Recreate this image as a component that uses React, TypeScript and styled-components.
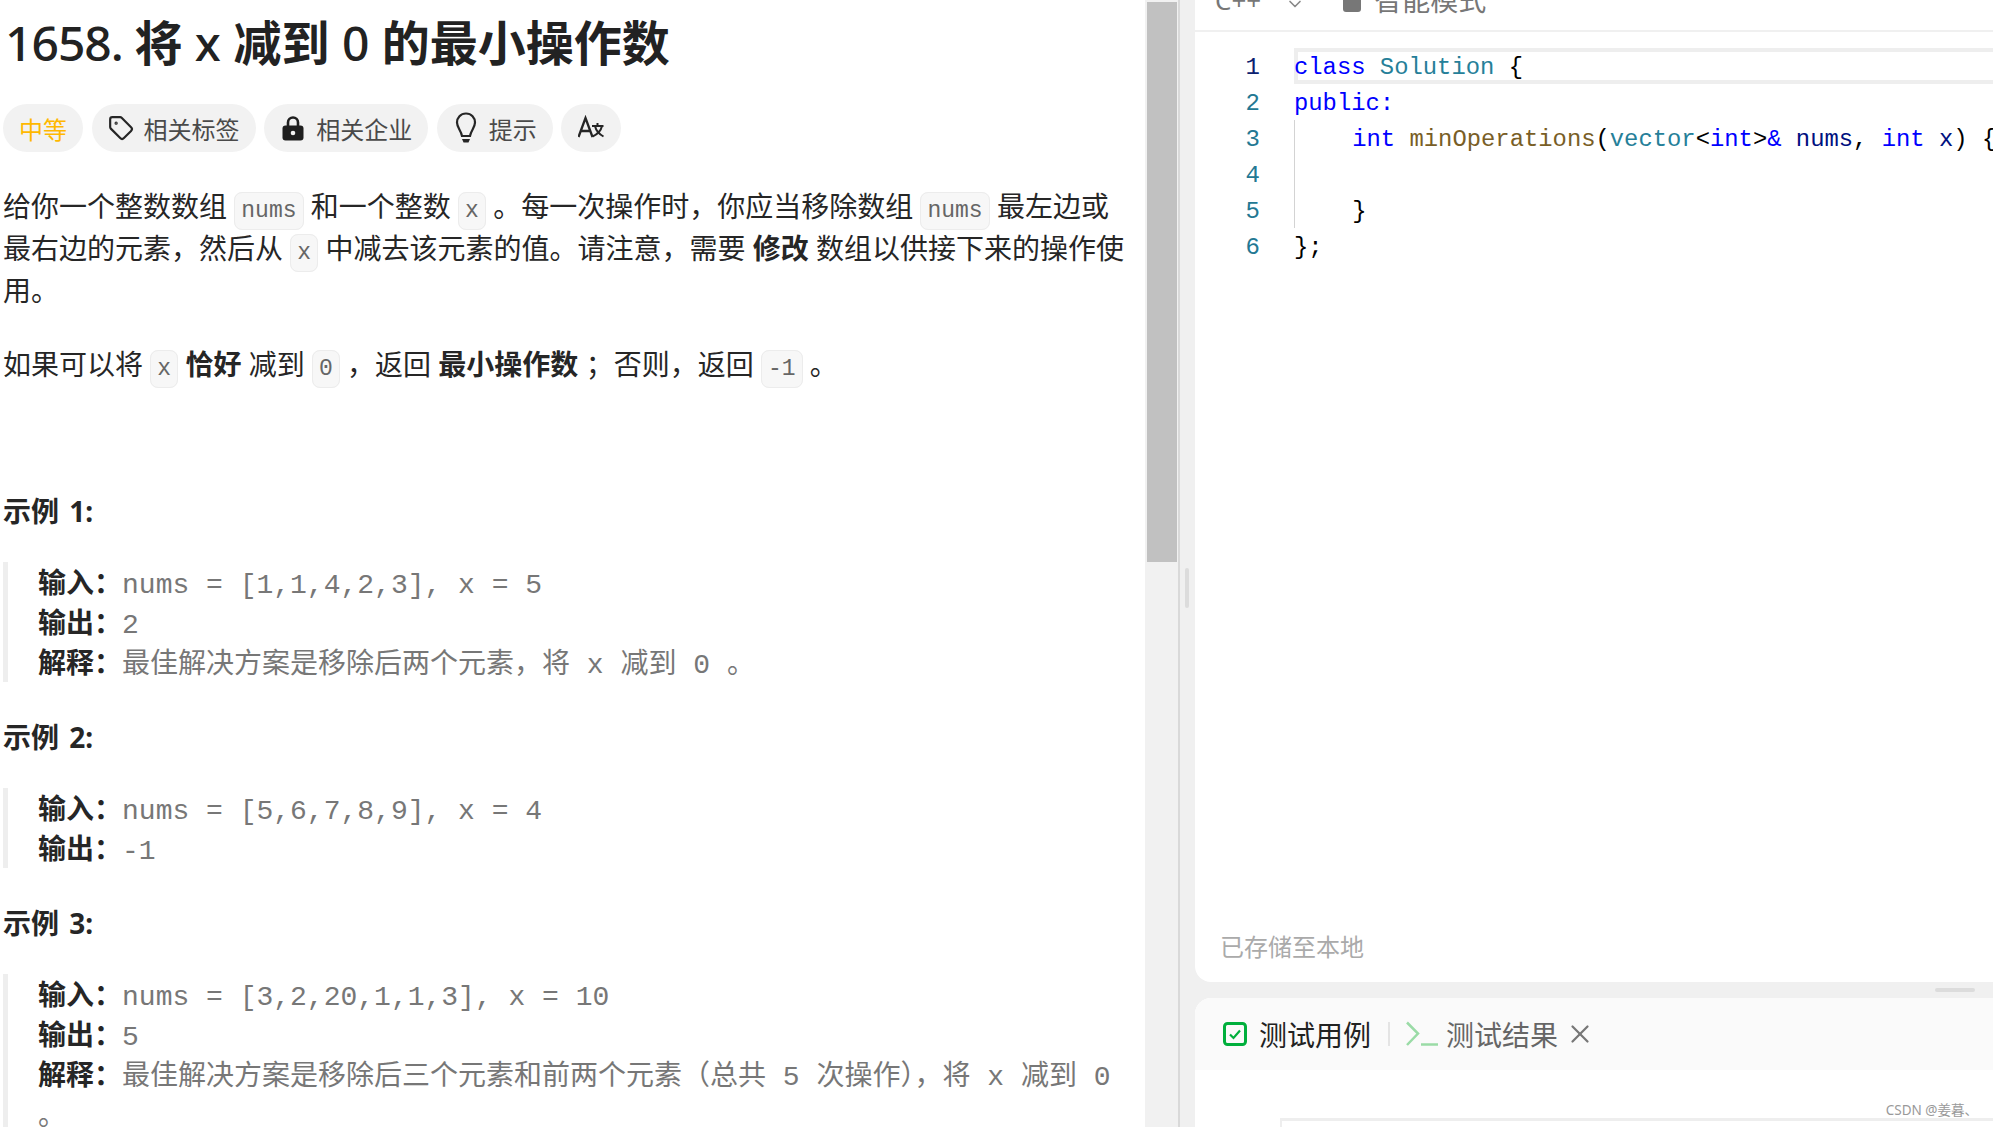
import React from 'react';
import styled, { createGlobalStyle } from 'styled-components';
import { ChevronDown, Tag as TagIcon, X } from 'lucide-react';

const sansStack = `"Noto Sans", "Noto Sans CJK SC", sans-serif`;
const monoStack = `"Liberation Mono", "Noto Sans CJK SC", monospace`;

const GlobalStyle = createGlobalStyle`
  html, body {
    margin: 0;
    padding: 0;
    width: 100%;
    height: 100%;
    overflow: hidden;
    background: #fff;
  }
`;

const Page = styled.div`
  width: 1993px;
  height: 1127px;
  display: flex;
  overflow: hidden;
  font-family: ${sansStack};
  position: relative;
`;

const Description = styled.div`
  width: 1145px;
  height: 1127px;
  flex: none;
  overflow: hidden;
  box-sizing: border-box;
  padding: 13px 20px 0 3px;
  color: #262626;
`;

const Title = styled.h1`
  margin: 0 0 0 2px;
  font-size: 48px;
  line-height: 60px;
  font-weight: 700;
  color: #222;
  white-space: pre;
`;

const TitleLatin = styled.span<{ $tight?: boolean }>`
  font-weight: 500;
  ${p => p.$tight && 'letter-spacing: -1px;'}
`;

const TagRow = styled.div`
  display: flex;
  gap: 8.600px;
  margin: 31px 0 33px;
`;

const Tag = styled.div<{ $medium?: boolean; $iconOnly?: boolean }>`
  height: 48px;
  padding: 0 ${p => (p.$iconOnly ? '17px' : '16px')};
  border-radius: 24px;
  background: #f2f2f2;
  display: flex;
  align-items: center;
  gap: 10px;
  font-size: 24px;
  color: ${p => (p.$medium ? '#ffb800' : '#4a4a4a')};
  svg { flex: none; color: #262626; }
`;

const Paragraph = styled.p`
  margin: 0 0 32px;
  font-size: 28px;
  line-height: 42px;
`;

const Chip = styled.code`
  font-family: ${monoStack};
  font-size: 23px;
  line-height: 24px;
  color: #666;
  background: #f7f7f7;
  border: 1px solid #ececec;
  border-radius: 8px;
  padding: 5px 6px;
`;

const ExampleTitle = styled.div<{ $first?: boolean }>`
  margin-top: ${p => (p.$first ? '105px' : '34px')};
  font-size: 28px;
  line-height: 42px;
  font-weight: 700;
  word-spacing: 3px;
  color: #262626;
`;

const Quote = styled.div`
  margin-top: 30px;
  border-left: 5px solid #eee;
  padding-left: 30px;
  font-size: 28px;
  line-height: 40px;
`;

const Line = styled.div`
  white-space: pre-wrap;
`;

const Label = styled.strong`
  color: #262626;
  font-weight: 700;
`;

const Value = styled.span`
  font-family: ${monoStack};
  line-height: 24px;
  color: #777;
`;

const Scrollbar = styled.div`
  width: 33px;
  flex: none;
  background: #f1f1f1;
  padding: 2px 1px 0 2px;
  box-sizing: border-box;
`;

const ScrollThumb = styled.div`
  height: 560px;
  background: #c1c1c1;
`;

const Gutter = styled.div`
  width: 17px;
  flex: none;
  background: #f0f0f0;
  border-left: 2px solid #d9d9d9;
  box-sizing: border-box;
  padding: 568px 0 0 5px;
`;

const GutterHandle = styled.div`
  width: 4px;
  height: 40px;
  border-radius: 2px;
  background: #dcdcdc;
`;

const RightColumn = styled.div`
  flex: 1;
  min-width: 0;
  height: 1127px;
  display: flex;
  flex-direction: column;
  background: #f0f0f0;
`;

const EditorPanel = styled.div`
  height: 982px;
  flex: none;
  display: flex;
  flex-direction: column;
  background: #fff;
  border-radius: 0 0 0 16px;
  overflow: hidden;
`;

const Toolbar = styled.div`
  height: 32px;
  flex: none;
  box-sizing: border-box;
  border-bottom: 2px solid #f0f0f0;
  overflow: hidden;
  display: flex;
  align-items: flex-end;
  padding: 0 0 14px 20px;
  color: #777;
`;

const ToolbarText = styled.span<{ $wide?: boolean }>`
  font-size: ${p => (p.$wide ? '28px' : '26px')};
  line-height: 32px;
  white-space: nowrap;
  flex: none;
`;

const ToolbarChevron = styled.span`
  display: flex;
  flex: none;
  margin: 0 38px 2px 24px;
  color: #888;
`;

const ModeDot = styled.span`
  width: 18px;
  height: 22px;
  flex: none;
  border-radius: 3px;
  background: #777;
  margin: 0 13px 4px 0;
`;

const CodeArea = styled.div`
  flex: 1;
  padding-top: 16px;
`;

const CodeRow = styled.div`
  display: flex;
  height: 36px;
`;

const LineNumber = styled.div<{ $active?: boolean }>`
  width: 99px;
  flex: none;
  box-sizing: border-box;
  padding-right: 34px;
  text-align: right;
  font: 24px/40px ${monoStack};
  color: ${p => (p.$active ? '#0b216f' : '#237893')};
`;

const CodeText = styled.div<{ $active?: boolean; $guide?: boolean }>`
  flex: 1;
  min-width: 0;
  white-space: pre;
  overflow: hidden;
  box-sizing: border-box;
  font: 23.850px/40px ${monoStack};
  color: #000;
  ${p => p.$active && 'box-shadow: inset 4px 0 #eee, inset 0 4px #eee, inset 0 -4px #eee;'}
  ${p => p.$guide && 'border-left: 1px solid #d3d3d3;'}
`;

const Token = styled.span<{ $c: string }>`
  color: ${p => p.$c};
`;

const SavedNote = styled.div`
  padding: 0 0 18px 25px;
  font-size: 24px;
  line-height: 34px;
  color: #aaa;
`;

const Splitter = styled.div`
  height: 16px;
  flex: none;
  display: flex;
  justify-content: flex-end;
  padding: 6px 18px 0 0;
  box-sizing: border-box;
`;

const SplitterHandle = styled.div`
  width: 40px;
  height: 4px;
  border-radius: 2px;
  background: #dcdcdc;
`;

const TestPanel = styled.div`
  flex: 1;
  min-height: 0;
  background: #fff;
  border-radius: 16px 0 0 0;
  overflow: hidden;
`;

const TabBar = styled.div`
  height: 72px;
  background: #fafafa;
  display: flex;
  align-items: center;
  padding: 0 0 0 28px;
  box-sizing: border-box;
`;

const TabLabel = styled.span<{ $active?: boolean }>`
  font-size: 28px;
  margin-left: ${p => (p.$active ? '12px' : '8px')};
  color: ${p => (p.$active ? '#222' : '#666')};
`;

const TabDivider = styled.span`
  width: 2px;
  height: 24px;
  background: #e4e4e4;
  margin: 0 16px 0 17px;
`;

const TabClose = styled.span`
  display: flex;
  margin-left: 7px;
  color: #777;
`;

const TestBody = styled.div`
  padding: 48px 0 0 85px;
`;

const TestLine = styled.div`
  border-top: 3px solid #eee;
  border-left: 2px solid #eee;
  padding-left: 0;
  font: 24px/36px ${monoStack};
  color: #000;
`;

const Watermark = styled.div`
  position: absolute;
  right: 15px;
  bottom: 8px;
  font-size: 13.500px;
  line-height: 18px;
  color: #999;
`;

const LockGlyph = () => (
  <svg width="26" height="28" viewBox="0 0 26 28" fill="none">
    <path d="M8 13V8.500a5 5 0 0 1 10 0V13" stroke="#1f1f1f" strokeWidth="2.600" />
    <rect x="2.500" y="11.500" width="21" height="15" rx="3" fill="#1f1f1f" />
    <circle cx="13" cy="19" r="2.300" fill="#f2f2f2" />
  </svg>
);

const BulbGlyph = () => (
  <svg width="26" height="34" viewBox="0 0 26 34" fill="none" stroke="#262626" strokeWidth="2.200">
    <path d="M13 2.500C7.500 2.500 4 6.700 4 11.500c0 5 4 8 5 13.500h8c1-5.500 5-8.500 5-13.500 0-4.800-3.500-9-9-9z" />
    <path d="M9 28h8l-1.500 3.500h-5z" fill="#262626" stroke="none" />
  </svg>
);

const TranslateGlyph = () => (
  <svg width="26" height="26" viewBox="0 0 26 26" fill="none" stroke="#262626" strokeWidth="2.300">
    <path d="M0.500 22 7.500 3l7 19M3.200 16h8.600" />
    <path d="M14 11h11.500M19.500 8v3M17 11c1 4.500 4 8 8.500 10.500M24 11c-1 4.500-4 8-9.500 10.500" strokeWidth="2" />
  </svg>
);

const CheckGlyph = () => (
  <svg width="24" height="24" viewBox="0 0 24 24" fill="none">
    <rect x="1.500" y="1.500" width="21" height="21" rx="3" stroke="#00af3c" strokeWidth="3" />
    <path d="M7 12.500l3.500 3.500L17 8.500" stroke="#00af3c" strokeWidth="2.200" />
  </svg>
);

const TerminalGlyph = () => (
  <svg width="32" height="26" viewBox="0 0 32 26" fill="none" stroke="#9adba6" strokeWidth="2.500">
    <path d="M1 1.500 12 12.500 1 24" />
    <path d="M15 23.500h17" />
  </svg>
);

const KW = '#0000ff';
const TYPE = '#267f99';
const FN = '#795e26';
const VAR = '#001080';

// fullwidth punctuation used in the problem text
const COMMA = '\uFF0C';
const SEMI = '\uFF1B';
const COLON = '\uFF1A';
const OPEN = '\uFF08';
const CLOSE = '\uFF09';

const App = () => (
  <Page>
    <GlobalStyle />
    <Description>
      <Title>
        <TitleLatin $tight>1658. </TitleLatin>将<TitleLatin> x </TitleLatin>减到<TitleLatin> 0 </TitleLatin>的最小操作数
      </Title>
      <TagRow>
        <Tag $medium>中等</Tag>
        <Tag><TagIcon size={26} strokeWidth={2} />相关标签</Tag>
        <Tag><LockGlyph />相关企业</Tag>
        <Tag><BulbGlyph />提示</Tag>
        <Tag $iconOnly><TranslateGlyph /></Tag>
      </TagRow>
      <Paragraph>
        给你一个整数数组 <Chip>nums</Chip> 和一个整数 <Chip>x</Chip> 。每一次操作时{COMMA}你应当移除数组 <Chip>nums</Chip> 最左边或最右边的元素{COMMA}然后从 <Chip>x</Chip> 中减去该元素的值。请注意{COMMA}需要 <strong>修改</strong> 数组以供接下来的操作使用。
      </Paragraph>
      <Paragraph>
        如果可以将 <Chip>x</Chip> <strong>恰好</strong> 减到 <Chip>0</Chip> {COMMA}返回 <strong>最小操作数</strong> {SEMI}否则{COMMA}返回 <Chip>-1</Chip> 。
      </Paragraph>

      <ExampleTitle $first>示例 1:</ExampleTitle>
      <Quote>
        <Line><Label>输入{COLON}</Label><Value>nums = [1,1,4,2,3], x = 5</Value></Line>
        <Line><Label>输出{COLON}</Label><Value>2</Value></Line>
        <Line><Label>解释{COLON}</Label><Value>最佳解决方案是移除后两个元素{COMMA}将 x 减到 0 。</Value></Line>
      </Quote>

      <ExampleTitle>示例 2:</ExampleTitle>
      <Quote>
        <Line><Label>输入{COLON}</Label><Value>nums = [5,6,7,8,9], x = 4</Value></Line>
        <Line><Label>输出{COLON}</Label><Value>-1</Value></Line>
      </Quote>

      <ExampleTitle>示例 3:</ExampleTitle>
      <Quote>
        <Line><Label>输入{COLON}</Label><Value>nums = [3,2,20,1,1,3], x = 10</Value></Line>
        <Line><Label>输出{COLON}</Label><Value>5</Value></Line>
        <Line><Label>解释{COLON}</Label><Value>最佳解决方案是移除后三个元素和前两个元素{OPEN}总共 5 次操作{CLOSE}{COMMA}将 x 减到 0 。</Value></Line>
      </Quote>
    </Description>

    <Scrollbar><ScrollThumb /></Scrollbar>
    <Gutter><GutterHandle /></Gutter>

    <RightColumn>
      <EditorPanel>
        <Toolbar>
          <ToolbarText>C++</ToolbarText>
          <ToolbarChevron><ChevronDown size={20} /></ToolbarChevron>
          <ModeDot />
          <ToolbarText $wide>智能模式</ToolbarText>
        </Toolbar>
        <CodeArea>
          <CodeRow>
            <LineNumber $active>1</LineNumber>
            <CodeText $active><Token $c={KW}>class</Token> <Token $c={TYPE}>Solution</Token> {'{'}</CodeText>
          </CodeRow>
          <CodeRow>
            <LineNumber>2</LineNumber>
            <CodeText><Token $c={KW}>public</Token><Token $c={KW}>:</Token></CodeText>
          </CodeRow>
          <CodeRow>
            <LineNumber>3</LineNumber>
            <CodeText $guide>{'    '}<Token $c={KW}>int</Token> <Token $c={FN}>minOperations</Token>(<Token $c={TYPE}>vector</Token>{'<'}<Token $c={KW}>int</Token>{'>'}<Token $c={KW}>&amp;</Token> <Token $c={VAR}>nums</Token>, <Token $c={KW}>int</Token> <Token $c={VAR}>x</Token>) {'{'}</CodeText>
          </CodeRow>
          <CodeRow>
            <LineNumber>4</LineNumber>
            <CodeText $guide />
          </CodeRow>
          <CodeRow>
            <LineNumber>5</LineNumber>
            <CodeText $guide>{'    }'}</CodeText>
          </CodeRow>
          <CodeRow>
            <LineNumber>6</LineNumber>
            <CodeText>{'};'}</CodeText>
          </CodeRow>
        </CodeArea>
        <SavedNote>已存储至本地</SavedNote>
      </EditorPanel>
      <Splitter><SplitterHandle /></Splitter>
      <TestPanel>
        <TabBar>
          <CheckGlyph />
          <TabLabel $active>测试用例</TabLabel>
          <TabDivider />
          <TerminalGlyph />
          <TabLabel>测试结果</TabLabel>
          <TabClose><X size={30} strokeWidth={1.8} /></TabClose>
        </TabBar>
        <TestBody>
          <TestLine>[1,1,4,2,3]</TestLine>
        </TestBody>
      </TestPanel>
    </RightColumn>
    <Watermark>CSDN @姜暮、</Watermark>
  </Page>
);

export default App;
